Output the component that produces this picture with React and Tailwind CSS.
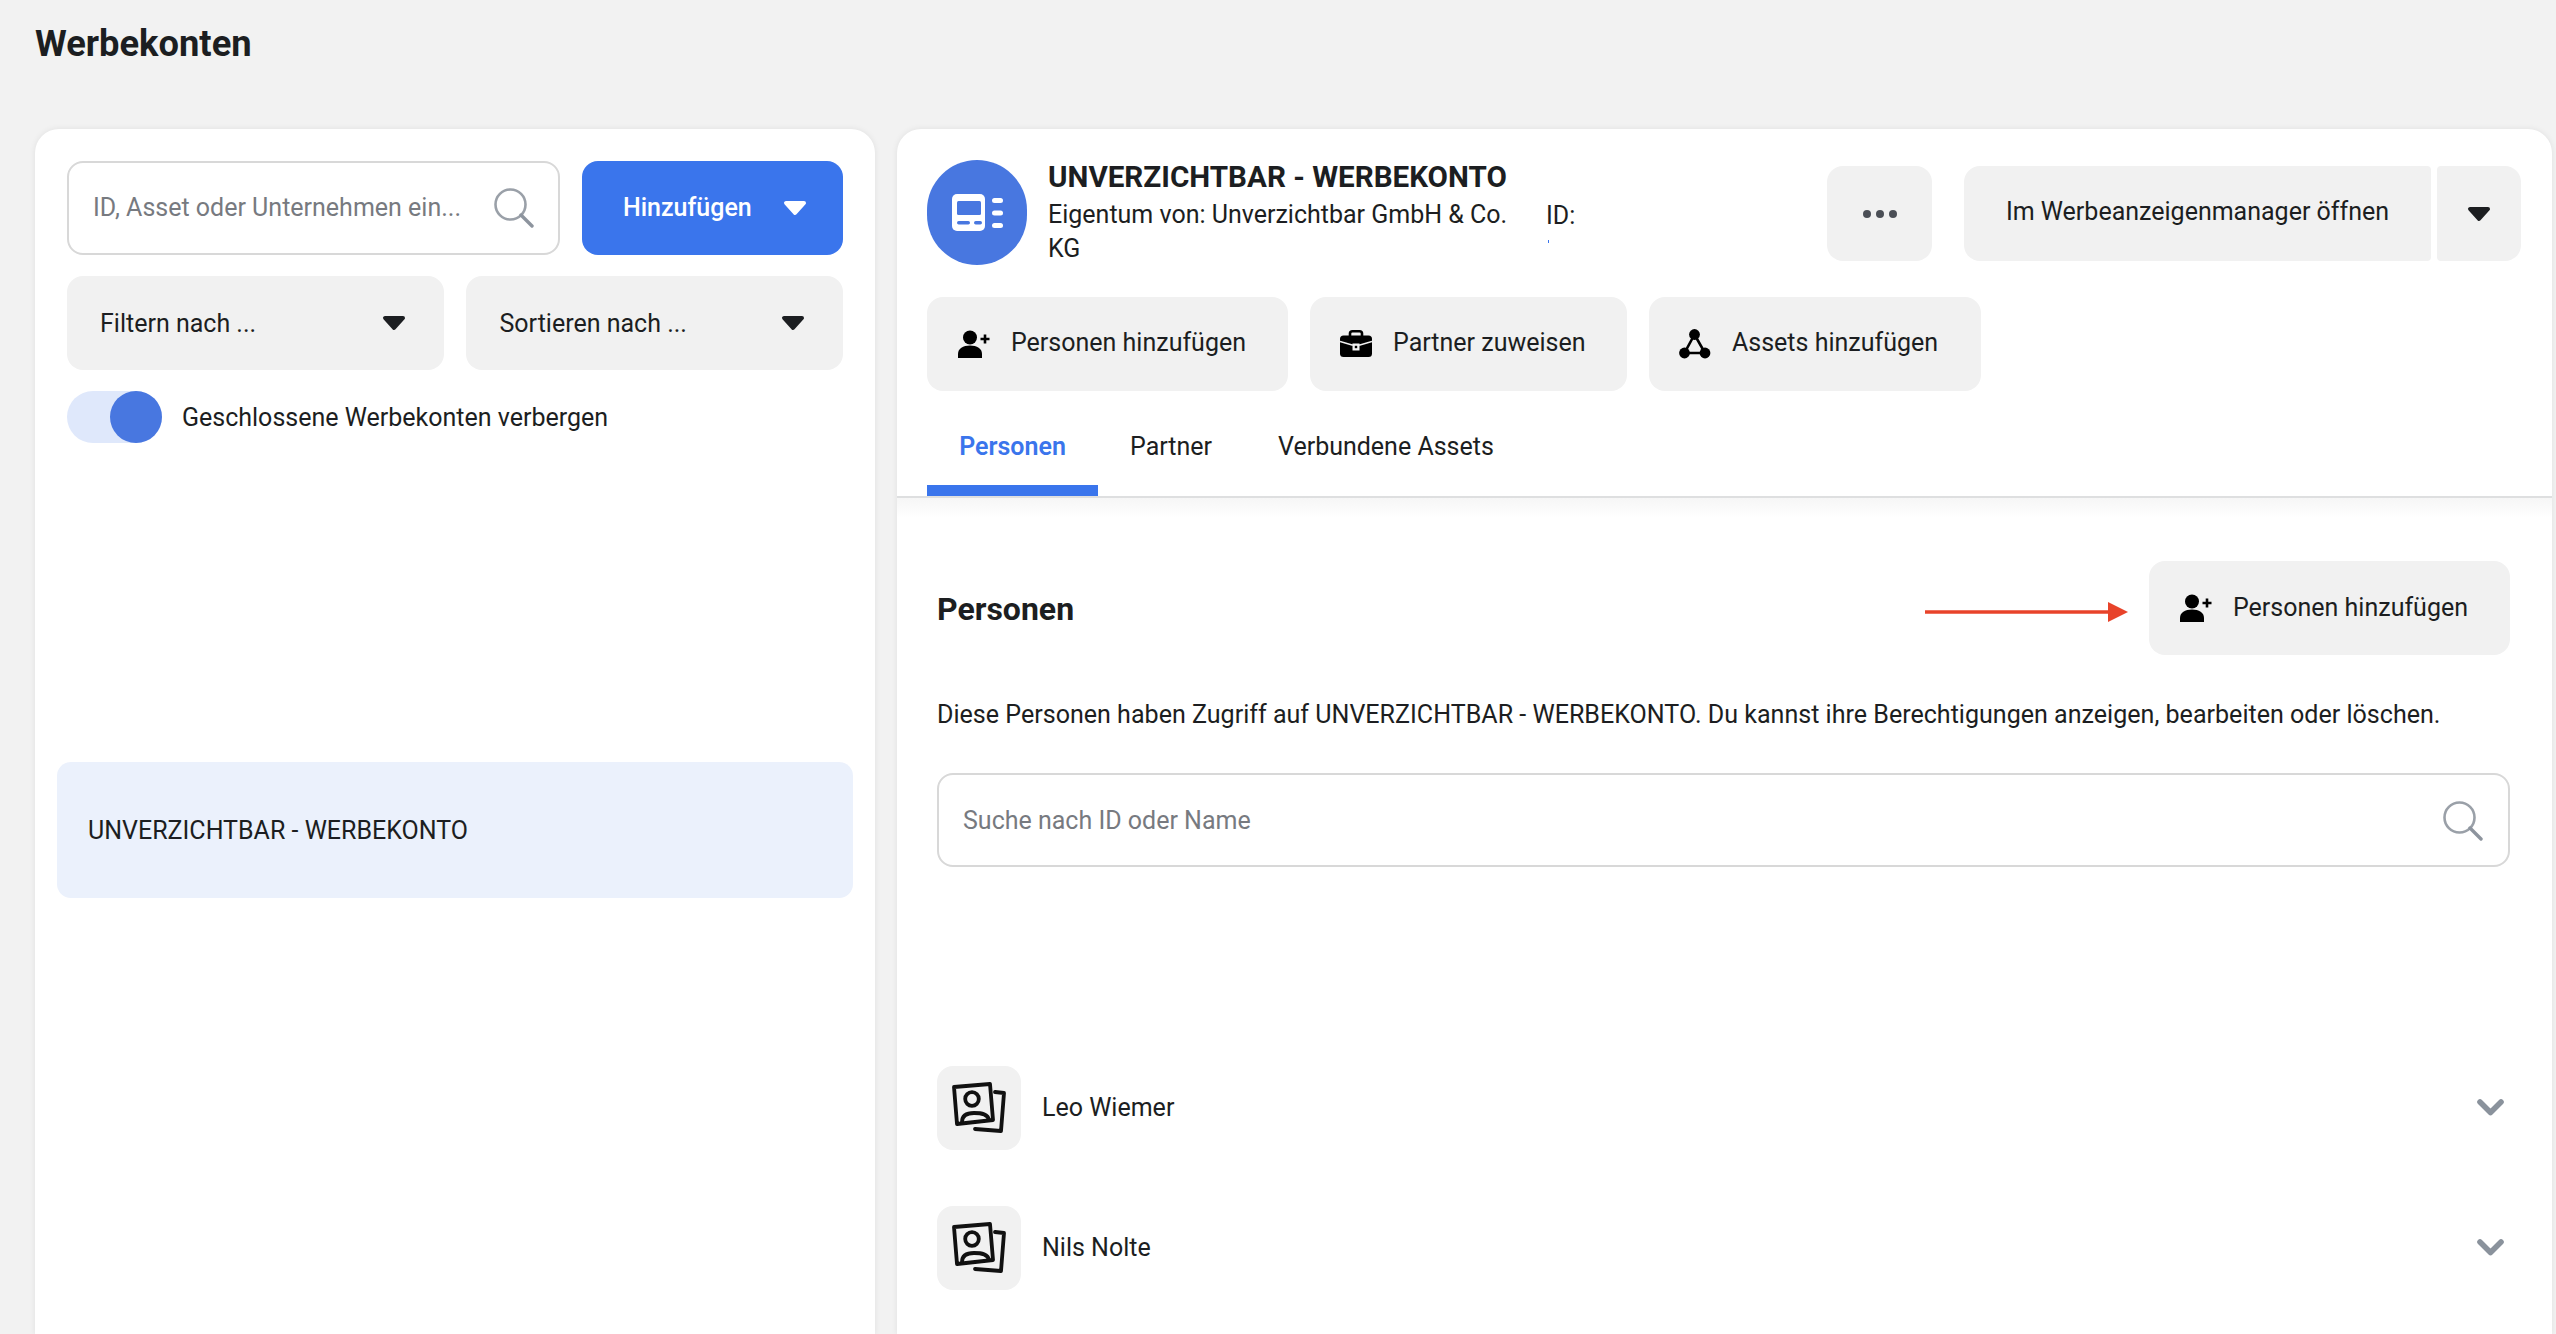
const Caret = ({ color = "#1c1e21" }) => (
  <svg width="24" height="16" viewBox="0 0 24 16" className="shrink-0">
    <path d="M3 3 H21 L12 13 Z" fill={color} stroke={color} strokeWidth="4" strokeLinejoin="round" />
  </svg>
);

const SearchIcon = () => (
  <svg width="40" height="40" viewBox="0 0 40 40" fill="none" className="shrink-0">
    <circle cx="16.5" cy="16.5" r="15" stroke="#9aa0a8" strokeWidth="2.6" />
    <path d="M27 27 L38 38" stroke="#8d949e" strokeWidth="3.4" strokeLinecap="round" />
  </svg>
);

const PersonPlus = () => (
  <svg width="32" height="28" viewBox="0 0 32 28" fill="#000" className="shrink-0">
    <circle cx="12" cy="7.5" r="7" />
    <path d="M0 28 v-4 c0-5.5 5-8.5 12-8.5 s12 3 12 8.5 v4 z" />
    <path d="M27 4.5 v9 M22.5 9 h9" stroke="#000" strokeWidth="2.6" />
  </svg>
);

const Briefcase = () => (
  <svg width="32" height="28" viewBox="0 0 32 28" fill="none" className="shrink-0">
    <path d="M10 6 V3.5 C10 2 11 1.3 12.5 1.3 H19.5 C21 1.3 22 2 22 3.5 V6" stroke="#000" strokeWidth="2.6" />
    <rect x="0" y="5.5" width="32" height="21.5" rx="3.5" fill="#000" />
    <path d="M0 11.5 L12 15 H20 L32 11.5" stroke="#f1f1f1" strokeWidth="1.6" />
    <rect x="12.5" y="13.5" width="7" height="7" fill="#f1f1f1" />
    <rect x="14.8" y="15.8" width="2.4" height="2.4" fill="#000" />
  </svg>
);

const AssetsIcon = () => (
  <svg width="32" height="30" viewBox="0 0 32 30" className="shrink-0">
    <path d="M15.5 5.5 L5.5 24 H26 Z" fill="none" stroke="#000" strokeWidth="2.6" />
    <circle cx="15.5" cy="5.5" r="5.4" fill="#000" />
    <circle cx="5.5" cy="24" r="5.4" fill="#000" />
    <circle cx="26" cy="24" r="5.4" fill="#000" />
  </svg>
);

const AccountIcon = () => (
  <svg width="100" height="105" viewBox="0 0 100 105">
    <rect x="25" y="34" width="33" height="37" rx="5" fill="#fff" />
    <rect x="30" y="41" width="24" height="14" rx="1.5" fill="#4877e0" />
    <rect x="30" y="61" width="13" height="3.4" rx="1.7" fill="#4877e0" />
    <rect x="47" y="61" width="8" height="3.4" rx="1.7" fill="#4877e0" />
    <rect x="65" y="38" width="11" height="5" rx="2.5" fill="#fff" />
    <rect x="65" y="50.5" width="11" height="5" rx="2.5" fill="#fff" />
    <rect x="65" y="63" width="11" height="5" rx="2.5" fill="#fff" />
  </svg>
);

const PhotosIcon = () => (
  <svg width="54" height="52" viewBox="0 0 54 52" fill="none" stroke="#111" strokeWidth="3.8" strokeLinejoin="round" strokeLinecap="round">
    <path d="M2 5 L38 2 L41 38 L5 42 Z" />
    <circle cx="20" cy="17" r="6.8" />
    <path d="M10 40 C10 33 15 31 22 31 C30 31 36 32 37 38" />
    <path d="M43 10 L52 11 L49 49 L23 47" />
  </svg>
);

const Chevron = () => (
  <svg width="27" height="18" viewBox="0 0 27 18" fill="none" className="mr-[6px]">
    <path d="M3 3 L13.5 13.5 L24 3" stroke="#8a929c" strokeWidth="5.6" strokeLinecap="round" strokeLinejoin="round" />
  </svg>
);

const GreyButton = ({ icon, label, className, labelClass = "pb-[2px]" }) => (
  <button className={`flex h-[94px] items-center rounded-[16px] bg-[#f1f1f1] ${className}`}>
    <span className="flex w-[53px] shrink-0">{icon}</span>
    <span className={labelClass}>{label}</span>
  </button>
);

const people = ["Leo Wiemer", "Nils Nolte"];

const App = () => {
  return (
    <div className="flex h-screen flex-col overflow-hidden bg-[#f2f2f2] font-[Roboto,sans-serif] text-[25px] text-[#1c1e21]">
      <h1 className="h-[129px] pl-[35px] pt-[20px] text-[36.3px] font-bold leading-[48px]">
        Werbekonten
      </h1>

      <div className="flex flex-1 gap-[22px] pl-[35px] pr-[4px]">
        <aside className="w-[840px] rounded-t-[24px] bg-white p-[32px] shadow-[0_0_6px_rgba(0,0,0,0.08)]">
          <div className="flex gap-[22px]">
            <div className="flex h-[94px] w-[493px] items-center justify-between rounded-[16px] border-2 border-[#d8d8d8] pl-[24px] pr-[24px]">
              <span className="text-[#777a80]">ID, Asset oder Unternehmen ein...</span>
              <SearchIcon />
            </div>
            <button className="flex h-[94px] flex-1 items-center justify-between rounded-[16px] bg-[#3a75ec] pl-[41px] pr-[36px] font-medium text-white">
              Hinzufügen
              <Caret color="#fff" />
            </button>
          </div>

          <div className="mt-[21px] flex gap-[22px]">
            <button className="flex h-[94px] flex-1 items-center justify-between rounded-[16px] bg-[#f1f1f1] pl-[33px] pr-[38px]">
              <span className="pt-[1px]">Filtern nach ...</span>
              <Caret />
            </button>
            <button className="flex h-[94px] flex-1 items-center justify-between rounded-[16px] bg-[#f1f1f1] pl-[34px] pr-[38px]">
              <span className="pt-[1px]">Sortieren nach ...</span>
              <Caret />
            </button>
          </div>

          <div className="mt-[21px] flex items-center gap-[20px]">
            <div className="flex h-[52px] w-[95px] justify-end rounded-full bg-[#dfe8fb]">
              <div className="size-[52px] rounded-full bg-[#4877e0]" />
            </div>
            <span className="pt-[2px]">Geschlossene Werbekonten verbergen</span>
          </div>

          <div className="-mx-[10px] mt-[319px] flex h-[136px] items-center rounded-[14px] bg-[#ebf1fc] pl-[31px] pt-[2px]">
            UNVERZICHTBAR - WERBEKONTO
          </div>
        </aside>

        <main className="flex-1 rounded-t-[24px] bg-white shadow-[0_0_6px_rgba(0,0,0,0.08)]">
          <div className="border-b-2 border-[#dedfe0] pl-[30px] pr-[31px] pt-[34px]">
            <div className="flex h-[100px] items-start">
              <div className="-mt-[3px] h-[105px] w-[100px] shrink-0 rounded-full bg-[#4877e0]">
                <AccountIcon />
              </div>
              <div className="-mt-[4px] ml-[21px] w-[480px] shrink-0">
                <div className="text-[29.6px] font-bold leading-[36px]">UNVERZICHTBAR - WERBEKONTO</div>
                <div className="mt-[3px] leading-[34px]">Eigentum von: Unverzichtbar GmbH & Co. KG</div>
              </div>
              <div className="ml-[18px] pt-[36px] leading-[33px]">
                ID:
                <div className="ml-[2px] mt-[8px] h-[3px] w-[1px] bg-[#3a75ec]" />
              </div>
              <button className="ml-auto mt-[3px] flex h-[95px] w-[105px] items-center justify-center gap-[5px] rounded-[16px] bg-[#f1f1f1]">
                <span className="size-[8px] rounded-full bg-[#4b4f56]" />
                <span className="size-[8px] rounded-full bg-[#4b4f56]" />
                <span className="size-[8px] rounded-full bg-[#4b4f56]" />
              </button>
              <button className="ml-[32px] mt-[3px] h-[95px] w-[467px] rounded-l-[16px] rounded-r-[4px] bg-[#f1f1f1] pb-[4px]">
                Im Werbeanzeigenmanager öffnen
              </button>
              <button className="ml-[6px] mt-[3px] flex h-[95px] w-[84px] items-center justify-center rounded-l-[4px] rounded-r-[16px] bg-[#f1f1f1]">
                <Caret />
              </button>
            </div>

            <div className="mt-[34px] flex gap-[22px]">
              <GreyButton icon={<PersonPlus />} label="Personen hinzufügen" className="w-[361px] pl-[31px]" />
              <GreyButton icon={<Briefcase />} label="Partner zuweisen" className="w-[317px] pl-[30px]" />
              <GreyButton icon={<AssetsIcon />} label="Assets hinzufügen" className="w-[332px] pl-[30px]" />
            </div>

            <nav className="mt-[25px] flex h-[80px] items-start">
              <a className="flex h-[80px] w-[171px] justify-center border-b-[11px] border-[#3a75ec] pt-[12px] font-semibold text-[#3a75ec]">
                Personen
              </a>
              <a className="ml-[32px] pt-[12px]">Partner</a>
              <a className="ml-[66px] pt-[12px]">Verbundene Assets</a>
            </nav>
          </div>
          <div className="h-[20px] bg-linear-to-b from-[#f6f6f6] to-white" />

          <section className="pl-[40px] pr-[42px] pt-[43px]">
            <div className="flex items-center justify-between">
              <h2 className="mt-[2px] text-[32px] font-bold">Personen</h2>
              <div className="flex items-center gap-[21px]">
                <svg width="203" height="22" viewBox="0 0 203 22" className="mt-[8px]">
                  <path d="M0 11 H184" stroke="#e8432a" strokeWidth="3.4" />
                  <path d="M183 1 L203 11 L183 21 Z" fill="#e8432a" />
                </svg>
                <GreyButton icon={<PersonPlus />} label="Personen hinzufügen" className="w-[361px] pl-[31px]" labelClass="" />
              </div>
            </div>

            <p className="mt-[46px] text-[25.07px] leading-[28px]">
              Diese Personen haben Zugriff auf UNVERZICHTBAR - WERBEKONTO. Du kannst ihre Berechtigungen anzeigen, bearbeiten oder löschen.
            </p>

            <div className="mt-[44px] flex h-[94px] items-center justify-between rounded-[16px] border-2 border-[#d8d8d8] pl-[24px] pr-[25px] pt-[1px]">
              <span className="pt-[1px] text-[#777a80]">Suche nach ID oder Name</span>
              <SearchIcon />
            </div>

            <ul className="mt-[199px] flex flex-col gap-[56px]">
              {people.map((name) => (
                <li key={name} className="flex items-center">
                  <div className="flex h-[84px] w-[84px] items-center justify-center rounded-[16px] bg-[#f1f1f1]">
                    <PhotosIcon />
                  </div>
                  <span className="ml-[21px] flex-1">{name}</span>
                  <Chevron />
                </li>
              ))}
            </ul>
          </section>
        </main>
      </div>
    </div>
  );
};

export default App;
